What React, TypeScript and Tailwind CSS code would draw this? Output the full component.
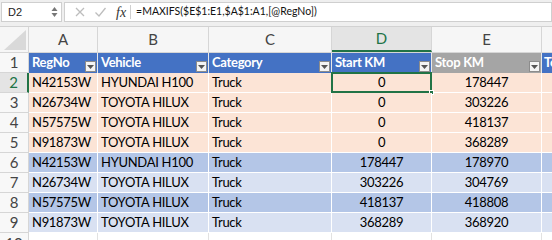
import React from "react";

const rows = [
  { reg: "N42153W", vehicle: "HYUNDAI H100", cat: "Truck", start: "0", stop: "178447", bg: "bg-[#fce4d6]" },
  { reg: "N26734W", vehicle: "TOYOTA HILUX", cat: "Truck", start: "0", stop: "303226", bg: "bg-[#fce4d6]" },
  { reg: "N57575W", vehicle: "TOYOTA HILUX", cat: "Truck", start: "0", stop: "418137", bg: "bg-[#fce4d6]" },
  { reg: "N91873W", vehicle: "TOYOTA HILUX", cat: "Truck", start: "0", stop: "368289", bg: "bg-[#fce4d6]" },
  { reg: "N42153W", vehicle: "HYUNDAI H100", cat: "Truck", start: "178447", stop: "178970", bg: "bg-[#b4c6e7]" },
  { reg: "N26734W", vehicle: "TOYOTA HILUX", cat: "Truck", start: "303226", stop: "304769", bg: "bg-[#d9e1f2]" },
  { reg: "N57575W", vehicle: "TOYOTA HILUX", cat: "Truck", start: "418137", stop: "418808", bg: "bg-[#b4c6e7]" },
  { reg: "N91873W", vehicle: "TOYOTA HILUX", cat: "Truck", start: "368289", stop: "368920", bg: "bg-[#d9e1f2]" },
];

// filter dropdown button in table header
function FilterBtn() {
  return (
    <span className="absolute right-[1px] bottom-[1px] w-[11px] h-[11px] bg-[#f4f4f4] border border-[#8c8c8c] flex items-center justify-center">
      <svg width="7" height="4" viewBox="0 0 7 4">
        <path d="M0 0h7L3.5 4z" fill="#555" />
      </svg>
    </span>
  );
}

function HeadCell({ label, w, bg }: { label: string; w: string; bg: string }) {
  return (
    <div className={`relative ${w} h-full ${bg} border-r border-[#e8e8e8] pl-[3px] text-white font-bold flex items-center`}>
      {label}
      <FilterBtn />
    </div>
  );
}

export default function App() {
  return (
    <div className="w-[552px] h-[240px] overflow-hidden bg-white font-['Lato',sans-serif] text-[13px] tracking-[-0.3px] text-black">
      {/* formula bar */}
      <div className="h-[27px] bg-[#efefef] border-b border-[#d2d2d2] flex items-center pt-[1px] pb-[3px] pl-[1px] tracking-normal">
        <div className="w-[61px] h-[20px] bg-white border border-[#cfcfcf] flex items-center justify-between pl-[6px] pr-[3px] text-[11px] text-[#222] font-['Liberation_Sans',sans-serif]">
          D2
          <svg width="7" height="12" viewBox="0 0 7 12">
            <path d="M3.5 1L6.5 5H0.5z" fill="#777" />
            <path d="M3.5 11L0.5 7H6.5z" fill="#777" />
          </svg>
        </div>
        <div className="flex-1 h-[20px] ml-[2px] bg-white border border-[#cfcfcf] flex items-center">
          <svg width="12" height="12" viewBox="0 0 12 12" className="ml-[9px]">
            <path d="M2 2L10 10M10 2L2 10" stroke="#bdbdbd" strokeWidth="1.3" />
          </svg>
          <svg width="13" height="12" viewBox="0 0 13 12" className="ml-[8px]">
            <path d="M1.5 6.5L5 10L11.5 2" stroke="#bdbdbd" strokeWidth="1.3" fill="none" />
          </svg>
          <span className="ml-[9px] text-[14px] italic font-['Liberation_Serif',serif] text-[#333]">fx</span>
          <span className="ml-[4px] w-px h-[14px] bg-[#cfcfcf]" />
          <span className="ml-[5px] text-[10.5px] text-[#111]">
            =MAXIFS($E$1:E1,$A$1:A1,[@RegNo])
          </span>
        </div>
      </div>

      {/* column letters */}
      <div className="h-[26px] flex bg-[#f6f6f6] border-b border-[#d6d6d6] text-[15px] text-[#444] tracking-normal">
        <div className="w-[29px] h-full border-r border-[#d6d6d6] flex items-end justify-end p-[2px]">
          <svg width="22" height="20" viewBox="0 0 22 20">
            <path d="M22 0V20H0z" fill="#d9d9d9" />
          </svg>
        </div>
        <div className="w-[69px] border-r border-[#d6d6d6] flex items-center justify-center">A</div>
        <div className="w-[111px] border-r border-[#d6d6d6] flex items-center justify-center">B</div>
        <div className="w-[123px] border-r border-[#d6d6d6] flex items-center justify-center">C</div>
        <div className="w-[100px] border-r border-[#d6d6d6] bg-[#e4e4e4] border-b-2 border-b-[#217346] text-[#217346] flex items-center justify-center">D</div>
        <div className="w-[110px] border-r border-[#d6d6d6] flex items-center justify-center">E</div>
        <div className="flex-1" />
      </div>

      {/* table header row */}
      <div className="h-[20px] flex">
        <div className="w-[29px] h-full bg-[#f8f8f8] border-r border-b border-[#d6d6d6] flex items-center justify-center text-[#444] text-[15px] tracking-normal">1</div>
        <HeadCell label="RegNo" w="w-[69px]" bg="bg-[#4472c4]" />
        <HeadCell label="Vehicle" w="w-[111px]" bg="bg-[#4472c4]" />
        <HeadCell label="Category" w="w-[123px]" bg="bg-[#4472c4]" />
        <HeadCell label="Start KM" w="w-[100px]" bg="bg-[#4472c4]" />
        <HeadCell label="Stop KM" w="w-[110px]" bg="bg-[#a5a5a5]" />
        <div className="flex-1 h-full bg-[#4472c4] pl-[2px] text-white font-bold flex items-center overflow-hidden">To</div>
      </div>

      {rows.map((r, i) => {
        const sel = i === 0;
        return (
          <div key={i} className="h-[20px] flex">
            <div
              className={`w-[29px] h-full border-b border-[#d6d6d6] flex items-center justify-center text-[15px] tracking-normal ${
                sel ? "bg-[#e4e4e4] text-[#217346] border-r-2 border-r-[#217346]" : "bg-[#f8f8f8] text-[#444] border-r border-r-[#d6d6d6]"
              }`}
            >
              {i + 2}
            </div>
            <div className={`w-[69px] h-full ${r.bg} border-r border-b border-white pl-[3px] flex items-center`}>{r.reg}</div>
            <div className={`w-[111px] h-full ${r.bg} border-r border-b border-white pl-[3px] flex items-center`}>{r.vehicle}</div>
            <div className={`w-[123px] h-full ${r.bg} border-r border-b border-white pl-[3px] flex items-center`}>{r.cat}</div>
            <div className={`relative w-[100px] h-full ${r.bg} border-r border-b border-white flex items-center justify-center`}>
              {r.start}
              {sel && (
                <>
                  <span className="absolute -left-px -top-px w-[101px] h-[21px] border-2 border-[#217346]" />
                  <span className="absolute -right-[3px] -bottom-[3px] w-[5px] h-[5px] bg-[#217346] border border-white" />
                </>
              )}
            </div>
            <div className={`w-[110px] h-full ${r.bg} border-r border-b border-white flex items-center justify-center`}>{r.stop}</div>
            <div className={`flex-1 h-full ${r.bg} border-b border-white`} />
          </div>
        );
      })}

      <div className="h-[20px] flex">
        <div className="w-[29px] h-full bg-[#f8f8f8] border-r border-[#d6d6d6] flex items-center justify-center text-[#444] text-[15px] tracking-normal">10</div>
        <div className="w-[69px] h-full border-r border-[#e2e2e2]" />
        <div className="w-[111px] h-full border-r border-[#e2e2e2]" />
        <div className="w-[123px] h-full border-r border-[#e2e2e2]" />
        <div className="w-[100px] h-full border-r border-[#e2e2e2]" />
        <div className="w-[110px] h-full border-r border-[#e2e2e2]" />
      </div>
    </div>
  );
}
